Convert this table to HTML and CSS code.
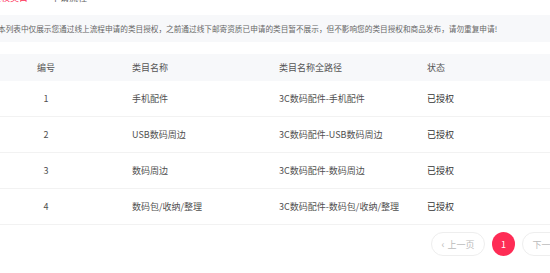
FILE: index.html
```html
<!DOCTYPE html>
<html lang="zh-CN">
<head>
<meta charset="utf-8">
<title>申请流程</title>
<link rel="stylesheet" href="styles.css">
</head>
<body>
<div class="page">
  <div class="crumbs">
    <span class="crumb-link">授权类目</span>
    <span class="crumb-sep">&gt;</span>
    <span class="crumb-current">申请流程</span>
  </div>
  <div class="notice">本列表中仅展示您通过线上流程申请的类目授权，之前通过线下邮寄资质已申请的类目暂不展示，但不影响您的类目授权和商品发布，请勿重复申请!</div>
  <div class="table">
    <div class="row head">
      <div class="c1">编号</div><div class="c2">类目名称</div><div class="c3">类目名称全路径</div><div class="c4">状态</div>
    </div>
    <div class="row">
      <div class="c1">1</div><div class="c2">手机配件</div><div class="c3">3C数码配件-手机配件</div><div class="c4">已授权</div>
    </div>
    <div class="row">
      <div class="c1">2</div><div class="c2">USB数码周边</div><div class="c3">3C数码配件-USB数码周边</div><div class="c4">已授权</div>
    </div>
    <div class="row">
      <div class="c1">3</div><div class="c2">数码周边</div><div class="c3">3C数码配件-数码周边</div><div class="c4">已授权</div>
    </div>
    <div class="row">
      <div class="c1">4</div><div class="c2">数码包/收纳/整理</div><div class="c3">3C数码配件-数码包/收纳/整理</div><div class="c4">已授权</div>
    </div>
  </div>
  <div class="pager">
    <span class="pg-btn disabled"><span class="chev">‹</span>上一页</span>
    <span class="pg-num">1</span>
    <span class="pg-btn">下一页<span class="chev">›</span></span>
  </div>
</div>
</body>
</html>
```
FILE: styles.css
```css
html, body {
  margin: 0;
  padding: 0;
  background: #fff;
  overflow: hidden;
}
body {
  font-family: "Noto Sans CJK SC", "Noto Sans", sans-serif;
  color: #333;
}
.page {
  margin-left: -10px;
  margin-top: -8px;
  width: 595px;
}
.crumbs {
  font-size: 9px;
  line-height: 12px;
  height: 12px;
  padding-left: 2px;
  margin-bottom: 11px;
  display: flex;
  gap: 8px;
  color: #666;
}
.crumb-link { color: #fe2c55; }
.crumb-sep { color: #bbb; margin: 0 1px; }
.notice {
  background: #f7f8fa;
  height: 27px;
  line-height: 27px;
  font-size: 7.65px;
  color: #666;
  padding-left: 8px;
  white-space: nowrap;
  margin-bottom: 12px;
}
.table {
  font-size: 9px;
}
.row {
  display: grid;
  grid-template-columns: 112px 177px 148px 1fr;
  align-items: center;
  height: 35px;
  border-bottom: 1px solid #f2f2f2;
  color: #505050;
}
.row.head {
  height: 27px;
  border-bottom: none;
  background: #f7f8fa;
  color: #555;
}
.c1 { text-align: center; }
.c2 { padding-left: 30px; }
.row .c4 { color: #333; }
.row.head .c4 { color: #555; }
.pager {
  margin-top: 7px;
  display: flex;
  gap: 7px;
  padding-left: 441px;
}
.pg-btn {
  box-sizing: border-box;
  height: 24px;
  width: 54px;
  border: 1px solid #eee;
  border-radius: 12px;
  font-size: 9px;
  color: #bbb;
  display: flex;
  align-items: center;
  justify-content: center;
  gap: 3px;
}
.chev { font-size: 10px; line-height: 1; }
.pg-num {
  width: 23px;
  height: 24px;
  border-radius: 50%;
  background: #fe2c55;
  color: #fff;
  font-size: 9px;
  display: flex;
  align-items: center;
  justify-content: center;
}
```
